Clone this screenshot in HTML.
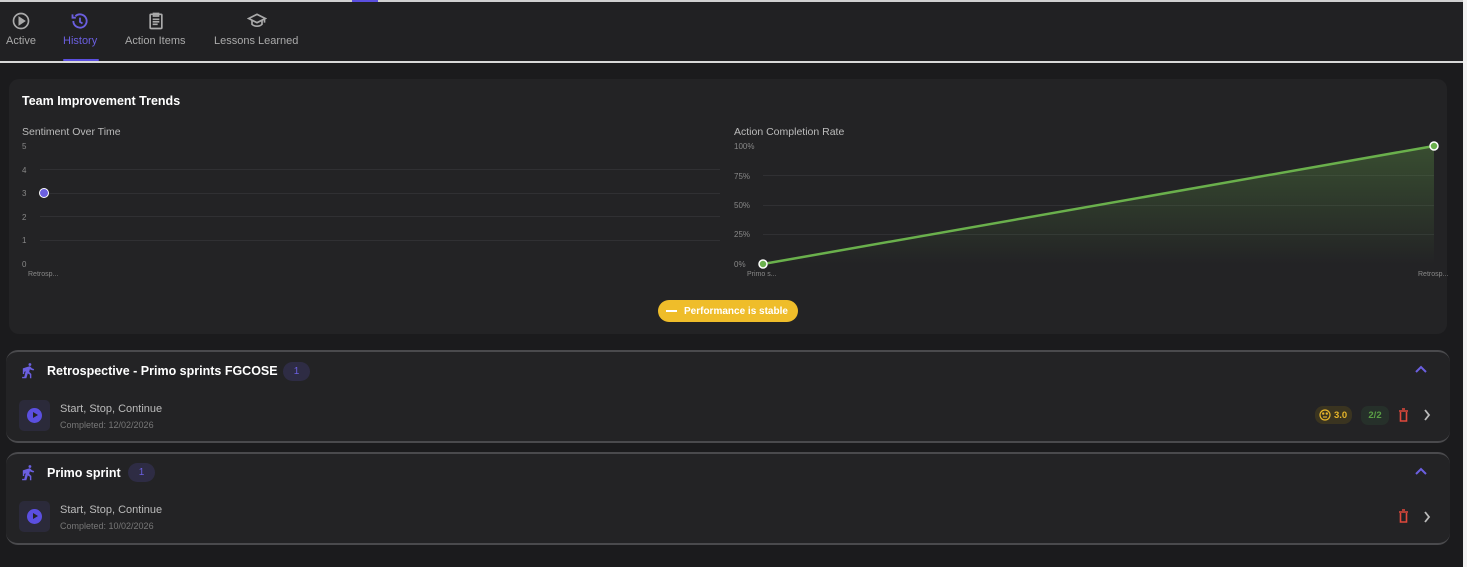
<!DOCTYPE html><html><head><style>
*{margin:0;padding:0;box-sizing:border-box}
body{width:1467px;height:567px;background:#1b1b1d;font-family:"Liberation Sans",sans-serif;position:relative;overflow:hidden;color:#fff}
.a{position:absolute}
.hdr{left:0;top:0;width:1463px;height:62px;background:#212123;border-top:2px solid #d0d0d0}
.tab{position:absolute;top:35px;font-size:11px;color:#aaa}
.t{font-size:8px;color:#888;position:absolute}
.grid{position:absolute;height:1px;background:#303033}
.acc{position:absolute;left:6px;width:1444px;background:#232325;border-top:2px solid #4a4a4d;border-bottom:2px solid #4a4a4d;border-radius:12px}
.bd{position:absolute;width:27px;height:19px;border-radius:10px;background:#2e2c44;color:#6b5fe0;font-size:10px;text-align:center;line-height:19px}
</style></head><body>
<div class="a hdr"></div>
<div class="a" style="left:352px;top:0;width:26px;height:2px;background:#5b4fe0"></div>
<svg class="a" style="left:11px;top:11px" width="20" height="20" viewBox="0 0 24 24" fill="none" stroke="#aaa" stroke-width="2"><circle cx="12" cy="12" r="9"/><path d="M10 8l6 4-6 4z" fill="#aaa"/></svg>
<svg class="a" style="left:70px;top:11px" width="20" height="20" viewBox="0 0 24 24" fill="none" stroke="#6b5fe0" stroke-width="2.2"><path d="M4 12a8 8 0 1 0 2.5-5.8"/><path d="M3 4v4h4"/><path d="M12 8v5l3 2"/></svg>
<svg class="a" style="left:146px;top:11px" width="20" height="20" viewBox="0 0 24 24" fill="none" stroke="#aaa" stroke-width="2"><rect x="5" y="4" width="14" height="17" rx="1"/><path d="M9 3h6v3H9zM8 10h8M8 13h8M8 16h6"/></svg>
<svg class="a" style="left:247px;top:11px" width="20" height="20" viewBox="0 0 24 24" fill="none" stroke="#aaa" stroke-width="2"><path d="M2 9l10-5 10 5-10 5z"/><path d="M6 11v5c3 3 9 3 12 0v-5M21 9v5"/></svg>
<div class="tab" style="left:6px;top:35px">Active</div>
<div class="tab" style="left:63px;top:35px;color:#6b5fe0">History</div>
<div class="tab" style="left:125px;top:35px">Action Items</div>
<div class="tab" style="left:214px;top:35px">Lessons Learned</div>
<div class="a" style="left:63px;top:59px;width:36px;height:2px;background:#5b4fe0;border-radius:1px"></div>
<div class="a" style="left:0;top:61px;width:1463px;height:2px;background:#d8d8d8"></div>
<div class="a" style="left:1463px;top:0;width:4px;height:567px;background:#f2f2f2"></div>

<div class="a" style="left:9px;top:79px;width:1438px;height:255px;background:#232325;border-radius:10px"></div>
<div class="a" style="left:22px;top:94px;font-size:12.5px;font-weight:bold">Team Improvement Trends</div>
<div class="a" style="left:22px;top:126px;font-size:10.5px;color:#bbb">Sentiment Over Time</div>
<div class="a" style="left:734px;top:126px;font-size:10.5px;color:#bbb">Action Completion Rate</div>

<div class="t" style="left:22px;top:142px">5</div><div class="t" style="left:22px;top:166px">4</div><div class="t" style="left:22px;top:189px">3</div><div class="t" style="left:22px;top:213px">2</div><div class="t" style="left:22px;top:236px">1</div><div class="t" style="left:22px;top:260px">0</div>
<div class="grid" style="left:40px;top:169px;width:680px"></div><div class="grid" style="left:40px;top:193px;width:680px"></div><div class="grid" style="left:40px;top:216px;width:680px"></div><div class="grid" style="left:40px;top:240px;width:680px"></div>
<div class="t" style="left:28px;top:271px;font-size:7px">Retrosp...</div>
<div class="a" style="left:39px;top:188px;width:10px;height:10px;border-radius:50%;background:#6b5fe0;border:1.5px solid #fff"></div>

<div class="t" style="left:734px;top:142px">100%</div><div class="t" style="left:734px;top:172px">75%</div><div class="t" style="left:734px;top:201px">50%</div><div class="t" style="left:734px;top:230px">25%</div><div class="t" style="left:734px;top:260px">0%</div>
<div class="grid" style="left:763px;top:175px;width:671px"></div><div class="grid" style="left:763px;top:205px;width:671px"></div><div class="grid" style="left:763px;top:234px;width:671px"></div>
<svg class="a" style="left:0;top:0" width="1467" height="300"><defs><linearGradient id="g" x1="0" y1="0" x2="0" y2="1"><stop offset="0" stop-color="#6ab04c" stop-opacity=".3"/><stop offset="1" stop-color="#6ab04c" stop-opacity="0"/></linearGradient></defs><path d="M763 264L1434 146V264Z" fill="url(#g)"/><path d="M763 264L1434 146" stroke="#6ab04c" stroke-width="2.5"/><circle cx="763" cy="264" r="4" fill="#6ab04c" stroke="#fff" stroke-width="1.5"/><circle cx="1434" cy="146" r="4" fill="#6ab04c" stroke="#fff" stroke-width="1.5"/></svg>
<div class="t" style="left:747px;top:271px;font-size:7px">Primo s...</div>
<div class="t" style="left:1418px;top:271px;font-size:7px">Retrosp...</div>
<div class="a" style="left:658px;top:300px;width:140px;height:22px;border-radius:11px;background:#efbd2a;font-size:10px;font-weight:bold;line-height:23px;padding-left:26px">Performance is stable</div>
<div class="a" style="left:666px;top:310px;width:11px;height:1.5px;background:#fff"></div>

<div class="acc" style="top:350px;height:93px"></div>
<div class="acc" style="top:452px;height:93px"></div>

<svg class="a" style="left:20px;top:362px" width="17" height="17" viewBox="0 0 24 24" fill="#6b5fe0"><circle cx="14" cy="3.5" r="2"/><path d="M10 7l4-1 3 3 3 1-1 2-4-1-1-1-1 4 3 3v6h-2v-5l-3-2-2 7H3v-2h3l2-8-2 1v3H4V9z"/></svg>
<svg class="a" style="left:20px;top:464px" width="17" height="17" viewBox="0 0 24 24" fill="#6b5fe0"><circle cx="14" cy="3.5" r="2"/><path d="M10 7l4-1 3 3 3 1-1 2-4-1-1-1-1 4 3 3v6h-2v-5l-3-2-2 7H3v-2h3l2-8-2 1v3H4V9z"/></svg>
<div class="a" style="left:47px;top:364px;font-size:12.5px;font-weight:bold">Retrospective - Primo sprints FGCOSE</div>
<div class="bd" style="left:283px;top:362px">1</div>
<div class="a" style="left:47px;top:466px;font-size:12.5px;font-weight:bold">Primo sprint</div>
<div class="bd" style="left:128px;top:463px">1</div>

<div class="a" style="left:19px;top:400px;width:31px;height:31px;border-radius:5px;background:#2b2a3a"></div>
<div class="a" style="left:27px;top:408px;width:15px;height:15px;border-radius:50%;background:#5b4fe0"></div>
<div class="a" style="left:33px;top:412px;border-left:5px solid #232325;border-top:3.5px solid transparent;border-bottom:3.5px solid transparent"></div>
<div class="a" style="left:60px;top:403px;font-size:11px;color:#bbb">Start, Stop, Continue</div>
<div class="a" style="left:60px;top:420px;font-size:9px;color:#777">Completed: 12/02/2026</div>

<div class="a" style="left:19px;top:501px;width:31px;height:31px;border-radius:5px;background:#2b2a3a"></div>
<div class="a" style="left:27px;top:509px;width:15px;height:15px;border-radius:50%;background:#5b4fe0"></div>
<div class="a" style="left:33px;top:513px;border-left:5px solid #232325;border-top:3.5px solid transparent;border-bottom:3.5px solid transparent"></div>
<div class="a" style="left:60px;top:504px;font-size:11px;color:#bbb">Start, Stop, Continue</div>
<div class="a" style="left:60px;top:521px;font-size:9px;color:#777">Completed: 10/02/2026</div>

<svg class="a" style="left:1414px;top:364px" width="14" height="10" viewBox="0 0 14 10"><path d="M2 8l5-5 5 5" stroke="#6b5fe0" stroke-width="2" fill="none"/></svg>
<svg class="a" style="left:1414px;top:466px" width="14" height="10" viewBox="0 0 14 10"><path d="M2 8l5-5 5 5" stroke="#6b5fe0" stroke-width="2" fill="none"/></svg>

<div class="a" style="left:1315px;top:406px;width:37px;height:18px;border-radius:8px;background:#3a3420;color:#e6b52a;font-size:9.5px;font-weight:bold;line-height:19px;padding-left:19px">3.0</div>
<svg class="a" style="left:1319px;top:409px" width="12" height="12" viewBox="0 0 12 12" fill="none" stroke="#e6b52a" stroke-width="1.2"><circle cx="6" cy="6" r="5"/><path d="M4 8h4"/><circle cx="4.2" cy="4.6" r=".6" fill="#e6b52a"/><circle cx="7.8" cy="4.6" r=".6" fill="#e6b52a"/></svg>
<div class="a" style="left:1361px;top:406px;width:28px;height:19px;border-radius:7px;background:#26302a;color:#5a9e45;font-size:9.5px;font-weight:bold;line-height:20px;text-align:center">2/2</div>
<svg class="a" style="left:1398px;top:408px" width="11" height="14" viewBox="0 0 11 14" fill="none" stroke="#e0493c" stroke-width="1.6"><path d="M1 3h9M4 1h3M2.5 4v9h6V4"/></svg>
<svg class="a" style="left:1398px;top:509px" width="11" height="14" viewBox="0 0 11 14" fill="none" stroke="#e0493c" stroke-width="1.6"><path d="M1 3h9M4 1h3M2.5 4v9h6V4"/></svg>
<svg class="a" style="left:1423px;top:409px" width="8" height="12" viewBox="0 0 8 12"><path d="M2 1l4 5-4 5" stroke="#bbb" stroke-width="1.8" fill="none"/></svg>
<svg class="a" style="left:1423px;top:511px" width="8" height="12" viewBox="0 0 8 12"><path d="M2 1l4 5-4 5" stroke="#bbb" stroke-width="1.8" fill="none"/></svg>
</body></html>
